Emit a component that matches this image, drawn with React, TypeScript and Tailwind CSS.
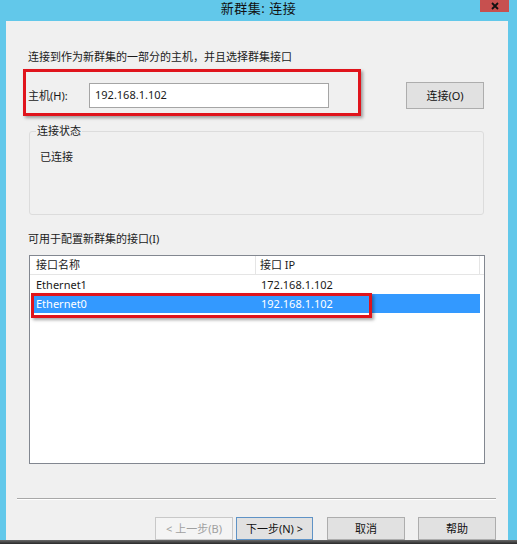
import React from "react";

const font = { fontFamily: '"Noto Sans", "Noto Sans CJK SC", sans-serif' };

function Btn({ children, w, kind }: { children: React.ReactNode; w: string; kind?: "disabled" | "focus" }) {
  const base = "h-[23px] flex items-center justify-center text-[11px] leading-[14px] border";
  const cls =
    kind === "disabled"
      ? "bg-[#f4f4f4] border-[#c8c8c8] text-[#a0a0a0]"
      : kind === "focus"
      ? "bg-[#e1e1e1] border-[#5f93c6] text-[#111]"
      : "bg-[#e1e1e1] border-[#adadad] text-[#111]";
  return <div className={`${base} ${cls} ${w}`}>{children}</div>;
}

export default function App() {
  return (
    <div className="w-[520px] h-[545px] bg-white overflow-hidden flex flex-col" style={font}>
      <div className="w-[517px] h-[540px] bg-[#62c8ea] flex flex-col">
        {/* title bar */}
        <div className="h-[21px] grid grid-cols-[1fr_auto_1fr] items-start">
          <div />
          <div className="text-[13px] leading-[14px] text-[#111] pt-[1px] tracking-[0.5px]">新群集: 连接</div>
          <div className="flex justify-end pr-[8px]">
            <div className="w-[29px] h-[12px] bg-[#c7504f] flex items-center justify-center">
              <svg width="8" height="8" viewBox="0 0 8 8">
                <path d="M1 1 L7 7 M7 1 L1 7" stroke="#111" strokeWidth="1.8" />
              </svg>
            </div>
          </div>
        </div>
        {/* body */}
        <div className="flex-1 ml-[6px] mr-[9px] bg-[#f0f0f0] overflow-hidden flex flex-col text-[#1a1a1a]">
          <div className="pl-[22px] pt-[29px] text-[11px] leading-[14px]">
            连接到作为新群集的一部分的主机，并且选择群集接口
          </div>
          <div className="flex items-start mt-[5px]">
            <div className="ml-[17px] w-[338px] h-[47px] border-[3px] border-[#e0141c] shadow-[2px_2px_3px_rgba(0,0,0,0.35)] flex items-start pt-[11px] pl-[2px]">
              <div className="w-[61px] text-[11px] leading-[25px]">主机(H):</div>
              <div className="w-[240px] h-[25px] bg-white border border-[#a5a5a5] flex items-center pl-[5px] text-[11px]">
                192.168.1.102
              </div>
            </div>
            <div className="ml-[45px] mt-[13px]">
              <Btn w="w-[78px] h-[27px]">连接(O)</Btn>
            </div>
          </div>
          <fieldset className="mt-[8px] ml-[23px] w-[455px] h-[92px] border border-[#dcdcdc] rounded-[3px] pt-[12px]">
            <legend className="ml-[6px] px-[1px] text-[11px] leading-[14px]">连接状态</legend>
            <div className="text-[11px] leading-[14px] pl-[10px]">已连接</div>
          </fieldset>
          <div className="pl-[22px] mt-[17px] text-[11px] leading-[14px]">可用于配置新群集的接口(I)</div>
          <div className="relative mt-[9px] ml-[23px] w-[456px] h-[210px] bg-white border border-[#828790] text-[11px]">
            <div className="flex h-[19px] border-b border-[#e5e5e5]">
              <div className="w-[226px] border-r border-[#e5e5e5] pl-[6px] leading-[18px]">接口名称</div>
              <div className="w-[224px] border-r border-[#e5e5e5] pl-[4px] leading-[18px]">接口 IP</div>
            </div>
            <div className="flex h-[19px] items-center">
              <div className="w-[226px] pl-[6px]">Ethernet1</div>
              <div className="pl-[5px]">172.168.1.102</div>
            </div>
            <div className="flex h-[19px] items-center bg-[#3399ff] text-white ml-[2px] w-[448px]">
              <div className="w-[224px] pl-[4px]">Ethernet0</div>
              <div className="pl-[5px]">192.168.1.102</div>
            </div>
            <div className="absolute left-[1px] top-[37px] w-[341px] h-[25px] border-[3px] border-[#e0141c] shadow-[2px_2px_3px_rgba(0,0,0,0.35)]" />
          </div>
          <div className="mt-[34px] ml-[11px] w-[479px] h-[2px] border-t border-[#a8a8a8] border-b border-b-white" />
          <div className="mt-[17px] flex pl-[149px]">
            <Btn w="w-[78px]" kind="disabled">&lt; 上一步(B)</Btn>
            <div className="ml-[3px]">
              <Btn w="w-[77px]" kind="focus">下一步(N) &gt;</Btn>
            </div>
            <div className="ml-[14px]">
              <Btn w="w-[78px]">取消</Btn>
            </div>
            <div className="ml-[13px]">
              <Btn w="w-[78px]">帮助</Btn>
            </div>
          </div>
        </div>
      </div>
      <div className="w-[517px] h-[4px] bg-gradient-to-b from-[#6a6a6a] to-[#2a2a2a]" />
    </div>
  );
}
